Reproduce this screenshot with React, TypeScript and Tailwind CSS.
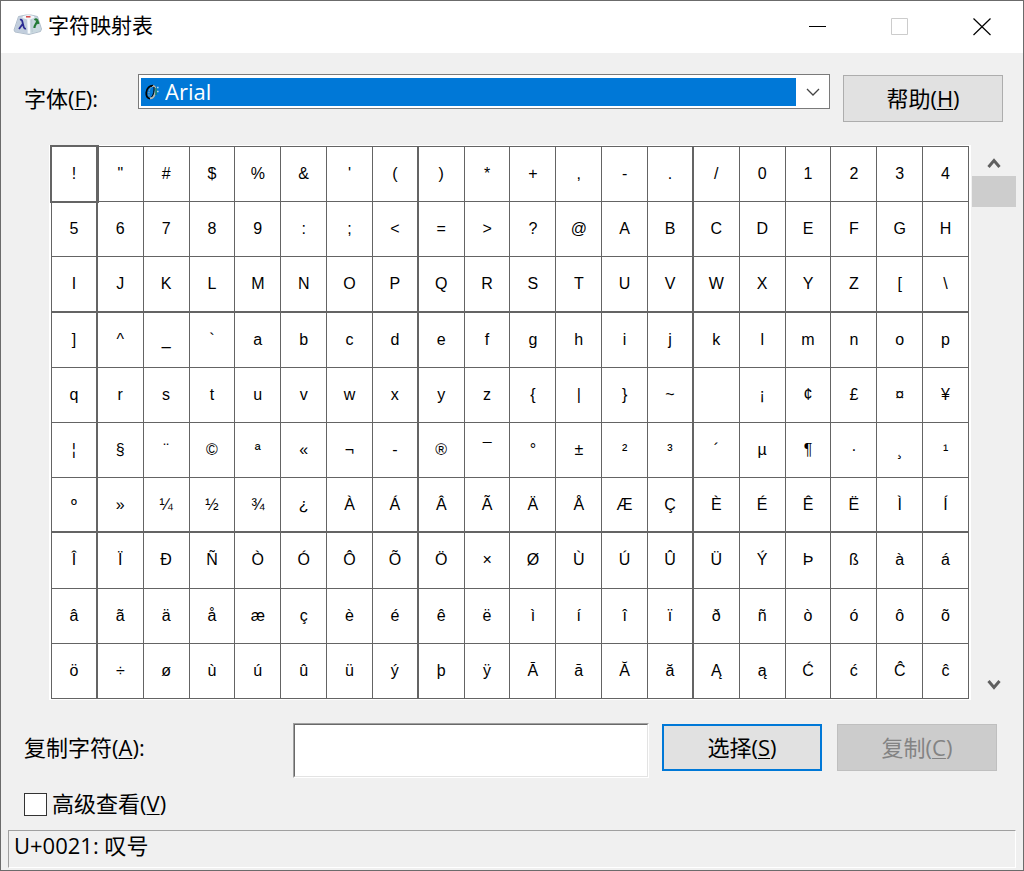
import { useState } from "react";
import type { ReactNode } from "react";

const ROWS = [
  "!\"#$%&'()*+,-./01234",
  "56789:;<=>?@ABCDEFGH",
  "IJKLMNOPQRSTUVWXYZ[\\",
  "]^_`abcdefghijklmnop",
  "qrstuvwxyz{|}~\u00a0¡¢£¤¥",
  "¦§¨©ª«¬-®¯°±²³´µ¶·¸¹",
  "º»¼½¾¿ÀÁÂÃÄÅÆÇÈÉÊËÌÍ",
  "ÎÏÐÑÒÓÔÕÖ×ØÙÚÛÜÝÞßàá",
  "âãäåæçèéêëìíîïðñòóôõ",
  "ö÷øùúûüýþÿĀāĂăĄąĆćĈĉ",
];

const THICK_AFTER_COL = [0, 7, 13];
const THICK_AFTER_ROW = [2, 6];

function AppIcon() {
  return (
    <svg width="29" height="22" viewBox="0 0 29 22" aria-hidden="true">
      <path d="M5.5 2.5 L13 1 H18 L24.5 2.5 L28.5 15 L27.5 17.5 L16 20.5 L2 18 L1 16 Z" fill="#ccd6e2" stroke="#a3b2c2" strokeWidth="0.8" />
      <path d="M5.5 3 L15.5 5.5 L16 20 L2.5 17.5 L1.8 15.5 Z" fill="#c2cedd" />
      <path d="M15.5 5.5 L24 3 L27.8 15 L27 17 L16 20 Z" fill="#c9d8df" />
      <path d="M10 2 L15 1 L21 2 L21.5 3.8 L15.5 6 L9.5 4 Z" fill="#f3f7fa" />
      <path d="M15.5 5.5 L16 19.5" stroke="#f8fbfd" strokeWidth="2.6" />
      <path d="M18.6 5.5 L19.2 18" stroke="#b5c3cf" strokeWidth="0.8" />
      <path d="M13 2.8 H17.5" stroke="#d4393a" strokeWidth="1.4" />
      <path d="M7 5.8 C9.2 5 9.3 7.5 10 10.2 C10.7 13 11 15.2 13 14.6 M9.8 9.8 L6 15" fill="none" stroke="#2a2a93" strokeWidth="1.8" />
      <path d="M21.5 6 C23.5 4.6 24.5 5.6 25.4 10 M24 7 C23.8 10 21.4 10.5 21.4 14" fill="none" stroke="#237a35" strokeWidth="2.1" />
    </svg>
  );
}

function OpenTypeIcon() {
  return (
    <svg width="14" height="16" viewBox="0 0 14 16" aria-hidden="true">
      <path d="M8.5 1.8 C4.5 1.4 1.8 4.5 1.3 8.5 C1 12 2.3 14.5 5 14.5" fill="none" stroke="#000" strokeWidth="1.8" />
      <path d="M8.5 2 C5.5 3 4 6 3.9 9 C3.8 11.5 4.2 13 5 13.6" fill="none" stroke="#b9b6a8" strokeWidth="1" strokeDasharray="1.5 1" />
      <path d="M8 1.8 C10.6 2 10.9 5 10.1 9 C9.4 12.4 7.6 14.4 5 14.5" fill="none" stroke="#b9b6a8" strokeWidth="1.6" />
      <path d="M9 3 C9.4 7 8.4 11 6.5 13" fill="none" stroke="#000" strokeWidth="1" />
      <path d="M11 4 V11" stroke="#18826f" strokeWidth="1.6" />
      <path d="M12 3.5 H13.6 M12 7.5 H13.6" stroke="#b7d8e8" strokeWidth="1.3" />
    </svg>
  );
}

function Arrow({ up = false }: { up?: boolean }) {
  return (
    <svg width="14" height="12" viewBox="0 0 14 12" aria-hidden="true">
      <path d={up ? "M1.5 10 L7 3.5 L12.5 10" : "M1.5 2 L7 8.5 L12.5 2"} fill="none" stroke="#606060" strokeWidth="3" />
    </svg>
  );
}

function Key({ children }: { children: ReactNode }) {
  return <span className="underline decoration-1 underline-offset-2">{children}</span>;
}

export default function App() {
  const [selected, setSelected] = useState(0);
  const [text, setText] = useState("");

  return (
    <div className="flex min-h-screen flex-col border border-[#6b6b6b] bg-[#f0f0f0] font-['Open_Sans','Noto_Sans_CJK_SC',sans-serif] text-[22px] leading-7 text-black">
      <header className="flex h-[52px] items-center bg-white pl-3">
        <div className="flex flex-1 items-center pb-1">
          <AppIcon />
          <h1 className="pl-[6px] text-[21px]">字符映射表</h1>
        </div>
        <button aria-label="最小化" className="flex h-full w-[82px] items-center justify-center">
          <svg width="18" height="18" viewBox="0 0 18 18"><path d="M0 8.5 H17" stroke="#000" /></svg>
        </button>
        <button aria-label="最大化" disabled className="flex h-full w-[82px] items-center justify-center">
          <svg width="18" height="18" viewBox="0 0 18 18"><path d="M0.5 0.5 H16.5 V16.5 H0.5 Z" fill="none" stroke="#ccc" /></svg>
        </button>
        <button aria-label="关闭" className="flex h-full w-[82px] items-center justify-center">
          <svg width="18" height="18" viewBox="0 0 18 18"><path d="M0.5 0.5 L17.5 17 M17.5 0.5 L0.5 17" stroke="#000" strokeWidth="1.2" /></svg>
        </button>
      </header>

      <main className="flex flex-1 flex-col">
        <div className="mt-[21px] flex h-12 pr-5 pl-[23px]">
          <label htmlFor="font" className="w-[114px] self-center pb-px">字体(<Key>F</Key>):</label>
          <div className="flex h-[35px] flex-1 border border-[#7a7a7a] bg-white pt-[3px] pb-[2px] pl-[2px]">
            <div className="flex flex-1 items-center bg-[#0078d7] pl-1">
              <OpenTypeIcon />
              <select id="font" className="h-7 flex-1 appearance-none bg-transparent pb-[2px] pl-[6px] leading-[26px] text-white outline-none">
                <option>Arial</option>
              </select>
            </div>
            <div className="flex w-[33px] items-center justify-center">
              <svg width="14" height="8" viewBox="0 0 14 8" aria-hidden="true"><path d="M1 1 L7 7 L13 1" fill="none" stroke="#444" strokeWidth="1.3" /></svg>
            </div>
          </div>
          <button className="ml-[13px] h-[47px] w-40 self-end border border-[#adadad] bg-[#e1e1e1] pb-[2px]">帮助(<Key>H</Key>)</button>
        </div>

        <div className="mt-[23px] flex flex-1 gap-px pr-[7px] pl-12">
          <div className="flex flex-1 bg-white px-[2px] py-px">
            <div className="grid flex-1 grid-cols-20 grid-rows-10 gap-px bg-[#646464] p-px font-['Liberation_Sans',Arial,sans-serif] text-base leading-5">
              {ROWS.flatMap((row, r) =>
                [...row].map((ch, c) => {
                  const id = r * 20 + c;
                  return (
                    <button
                      key={id}
                      onClick={() => setSelected(id)}
                      className={`flex items-center justify-center border-[#646464] bg-white ${
                        THICK_AFTER_COL.includes(c) ? "border-r" : ""
                      } ${THICK_AFTER_ROW.includes(r) ? "border-b" : ""} ${
                        id === selected ? "relative z-10 ring-2 ring-[#646464]" : ""
                      }`}
                    >
                      {ch}
                    </button>
                  );
                }),
              )}
            </div>
          </div>
          <div className="flex w-11 flex-col">
            <button aria-label="向上滚动" className="flex h-[31px] items-center justify-center pt-1"><Arrow up /></button>
            <div className="h-[31px] bg-[#cdcdcd]" />
            <div className="flex-1" />
            <button aria-label="向下滚动" className="flex h-[31px] items-center justify-center"><Arrow /></button>
          </div>
        </div>

        <div className="mt-[23px] flex pr-[26px] pl-[23px]">
          <label htmlFor="copy-text" className="mt-[10px] w-[269px]">复制字符(<Key>A</Key>):</label>
          <div className="flex h-[55px] flex-1 border border-t-[#a0a0a0] border-r-white border-b-white border-l-[#a0a0a0]">
            <input
              id="copy-text"
              value={text}
              onChange={(e) => setText(e.target.value)}
              className="min-w-0 flex-1 border border-t-[#696969] border-r-[#e3e3e3] border-b-[#e3e3e3] border-l-[#696969] bg-white px-2 outline-none"
            />
          </div>
          <button
            onClick={() => setText(text + [...ROWS.join("")][selected])}
            className="mt-px ml-[13px] h-[47px] w-40 border-2 border-[#0078d7] bg-[#e1e1e1] pb-[2px]"
          >
            选择(<Key>S</Key>)
          </button>
          <button disabled className="mt-px ml-[15px] h-[47px] w-40 border border-[#bfbfbf] bg-[#ccc] pb-[2px] text-[#838383]">
            复制(<Key>C</Key>)
          </button>
        </div>

        <div className="mt-[14px] flex h-6 items-center pl-[23px]">
          <input id="advanced" type="checkbox" className="size-[23px] appearance-none border border-[#333] bg-white checked:bg-[#0078d7]" />
          <label htmlFor="advanced" className="pb-[2px] pl-[5px]">高级查看(<Key>V</Key>)</label>
        </div>
      </main>

      <footer className="mx-[7px] mt-[14px] mb-[2px] h-[38px] border border-t-[#a0a0a0] border-r-white border-b-white border-l-[#a0a0a0] pl-[5px]">
        U+0021: 叹号
      </footer>
    </div>
  );
}
